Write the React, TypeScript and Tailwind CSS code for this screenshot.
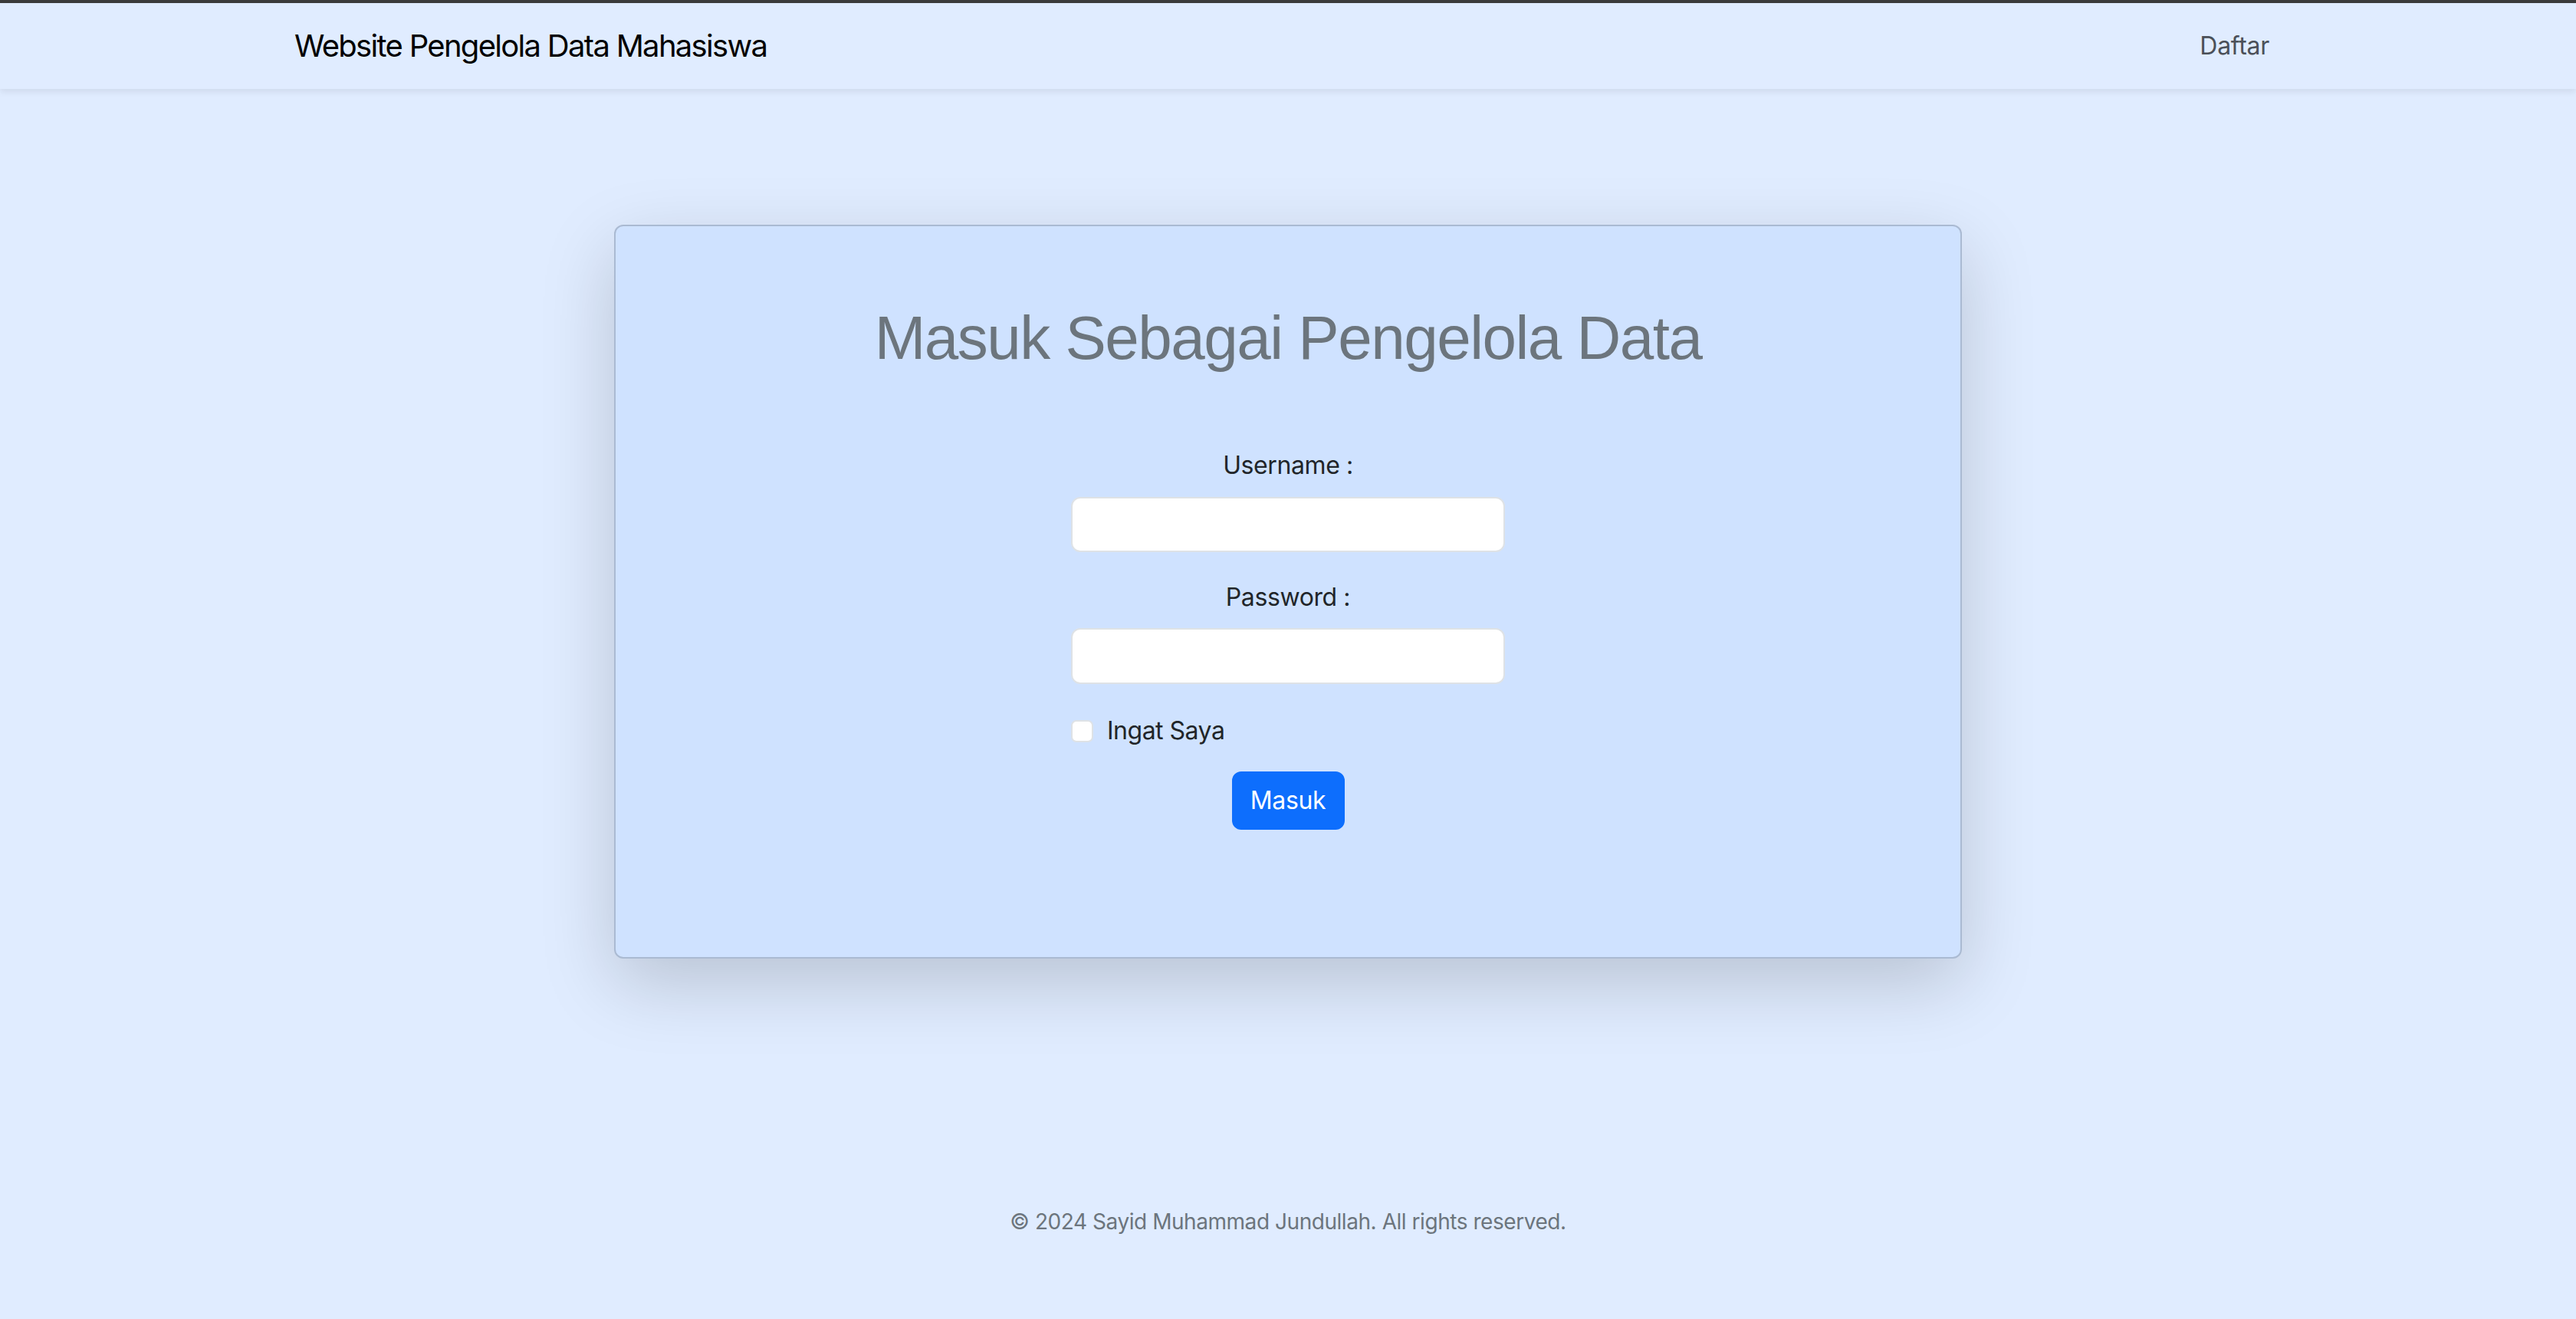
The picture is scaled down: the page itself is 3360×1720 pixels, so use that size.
export default function App() {
  return (
    <div className="min-h-[1720px] bg-[#e0ecff] flex flex-col font-['Inter',sans-serif] text-[#212529]">
      {/* Navbar */}
      <div className="h-[4px] bg-[#3b3b3b]" />
      <nav className="h-[112px] bg-[#e0ecff] shadow-[0_4px_8px_rgba(0,0,0,0.075)] relative z-10">
        <div className="h-full px-[384px] flex items-center justify-between">
          <a className="text-[40px] leading-[60px] text-black tracking-[-1.7px]">
            Website Pengelola Data Mahasiswa
          </a>
          <a className="text-[32px] leading-[48px] text-[#4b5058] pr-[16px] tracking-[-0.3px]">Daftar</a>
        </div>
      </nav>

      {/* Login card */}
      <main className="flex-1 flex justify-center pt-[177px]">
        <div className="w-[1758px] h-[957px] bg-[#cfe2ff] border-2 border-[rgba(0,0,0,0.175)] rounded-[12px] shadow-[0_32px_96px_rgba(0,0,0,0.175)] flex flex-col items-center pt-[98px]">
          <h1 className="font-['Liberation_Sans',Arial,sans-serif] text-[80px] leading-[96px] text-[#6c757d] tracking-[-1.5px]">
            Masuk Sebagai Pengelola Data
          </h1>

          <form className="w-[566px] mt-[94px] flex flex-col">
            <label className="text-center text-[32px] leading-[48px] tracking-[-0.4px]">Username :</label>
            <input
              type="text"
              className="mt-[17px] h-[72px] bg-white border-2 border-[#dee2e6] rounded-[12px] px-[24px] text-[32px] outline-none"
            />
            <label className="mt-[35px] text-center text-[32px] leading-[48px] tracking-[-0.4px]">Password :</label>
            <input
              type="password"
              className="mt-[16px] h-[73px] bg-white border-2 border-[#dee2e6] rounded-[12px] px-[24px] text-[32px] outline-none"
            />
            <div className="mt-[37px] flex items-center gap-[18px]">
              <span className="w-[29px] h-[29px] bg-white border-2 border-[#dee2e6] rounded-[7px]" />
              <span className="text-[32px] leading-[48px] tracking-[-0.5px]">Ingat Saya</span>
            </div>
            <div className="mt-[29px] flex justify-center">
              <button
                type="button"
                className="w-[147px] h-[76px] bg-[#0d6efd] text-white text-[32px] rounded-[12px] tracking-[-0.4px]"
              >
                Masuk
              </button>
            </div>
          </form>
        </div>
      </main>

      {/* Footer */}
      <footer className="pt-[322px] pb-[106px] text-center text-[28px] leading-[42px] text-[#6c757d] tracking-[-0.45px]">
        © 2024 Sayid Muhammad Jundullah. All rights reserved.
      </footer>
    </div>
  );
}
